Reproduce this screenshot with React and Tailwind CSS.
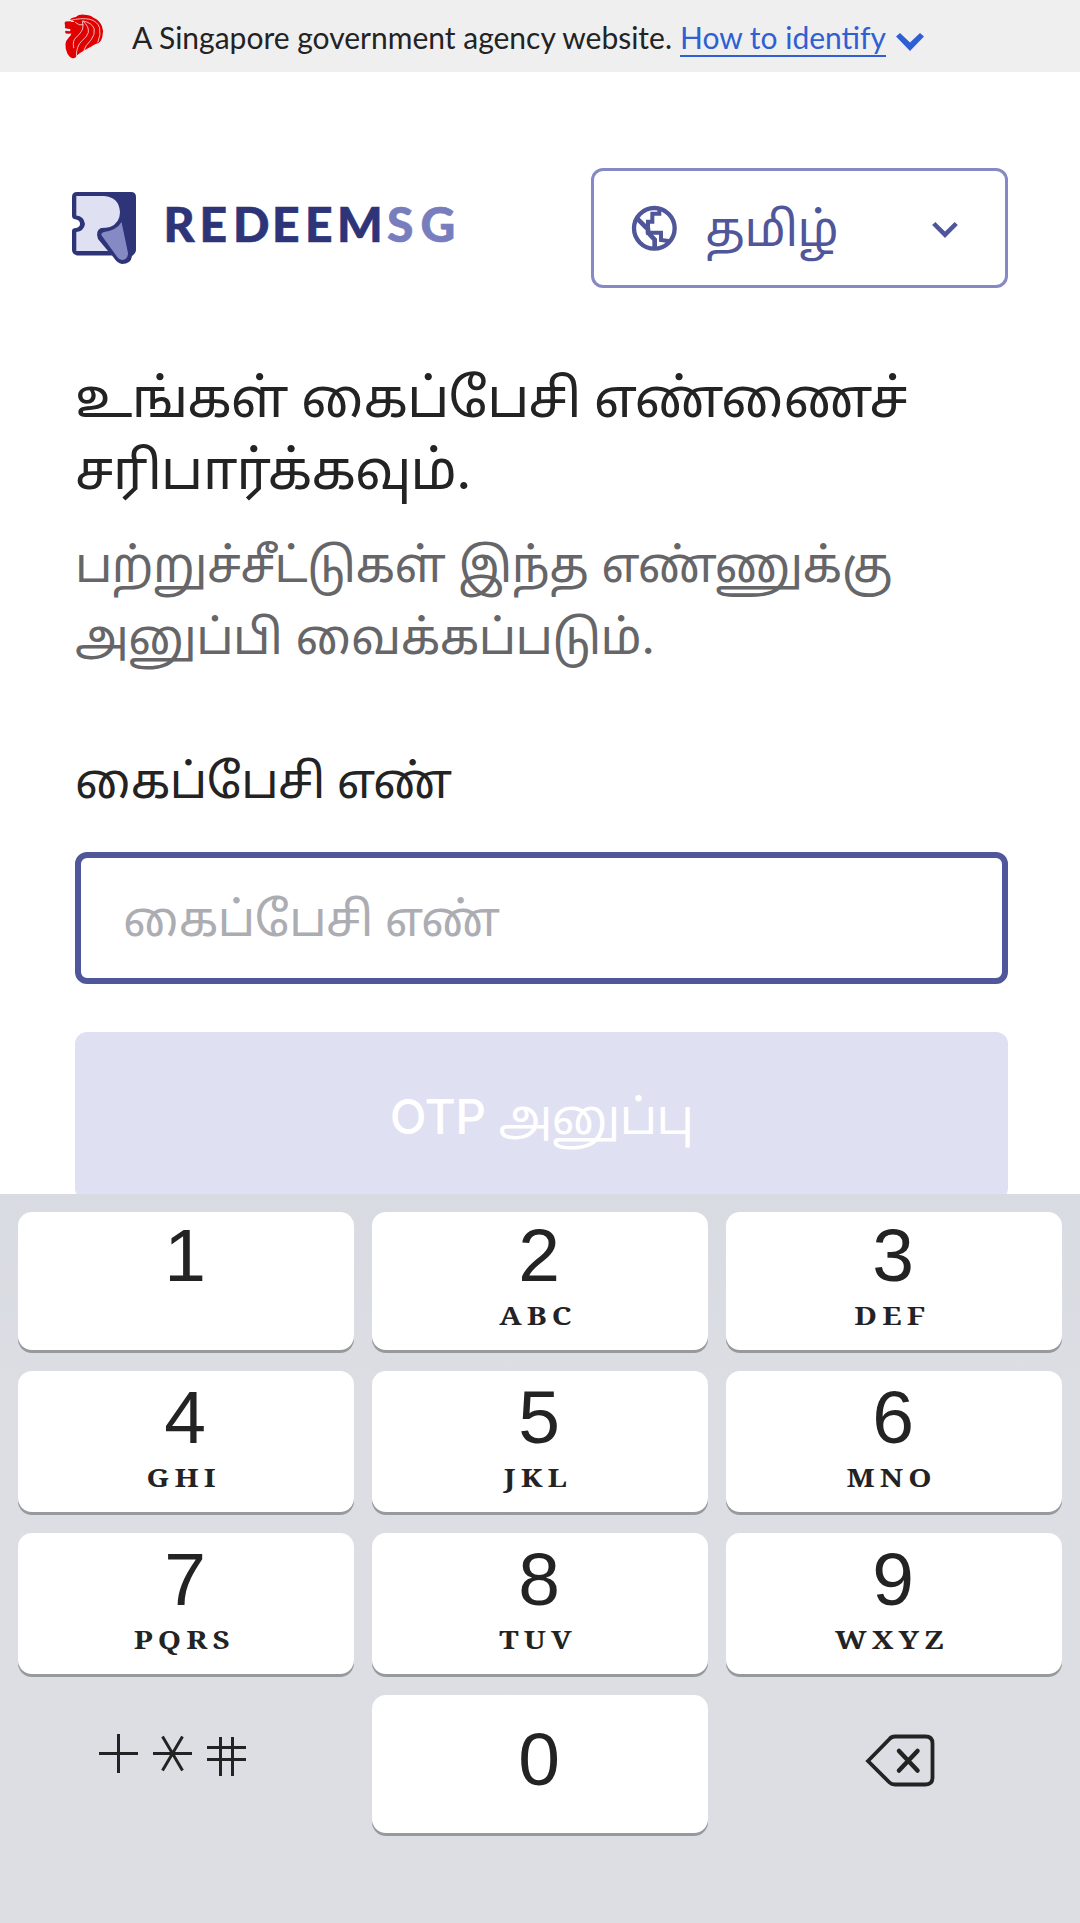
import { BiChevronDown } from "react-icons/bi";

function Lion() {
  return (
    <svg viewBox="74 43 120 136" className="h-[45px] w-[40px] shrink-0" aria-hidden="true">
      <path
        fill="#e00000"
        d="M96 56 Q103 53 109 52 Q118 44 134 45 Q152 45 164 55 Q181 62 188 79 Q194 94 190 108 Q188 123 178 131 Q168 133 156 141 Q144 148 134 153 Q122 160 111 169 Q109 177 99 177 Q90 174 84 163 Q77 150 78 134 Q79 123 88 114 Q95 108 96 102 Q86 103 79 102 Q75 98 78 94 L91 95 Q95 92 92 88 Q84 88 76 85 Q78 79 76 75 Q74 69 78 66 L92 65 Q99 68 106 66 Q98 62 92 61 Q93 58 96 56 Z"
      />
      <g fill="none" stroke="#efefef" strokeWidth="2.4" strokeLinecap="round">
        <path d="M94 62 Q126 54 152 59 Q174 65 181 84 Q186 105 176 128" />
        <path d="M131 65 Q150 80 147 99 Q143 112 128 124 Q111 139 111 168" />
        <path d="M129 66 Q134 84 126 96 Q119 106 110 114 Q98 124 103 145" />
        <path d="M131 64 Q158 69 165 88 Q168 105 155 122 Q138 138 134 152" />
        <path d="M108 69 Q120 79 131 76" />
      </g>
    </svg>
  );
}

function Logo() {
  return (
    <svg viewBox="0 0 390 74" className="h-[74px] w-[390px] shrink-0" role="img" aria-label="RedeemSG">
      <path
        fill="#2e3478"
        d="M5 0H59Q64 0 64 5V58Q64 61 60 64Q59 72 50 72Q45 71 42 66L40 63.500H5Q0 62 0 58V39Q0 36 4 36Q8 35 8 32Q8 28 4 27.500Q0 27 0 24V5Q0 0 5 0Z"
      />
      <path
        fill="#dfe0f2"
        d="M4.300 4H32Q47 5 48 20Q48 31 38 35Q34 36 29 36Q23 39 26 47L36 59H4.300V40Q12 39 13 32Q12 24 4.300 23.500Z"
      />
      <path fill="#868ac4" d="M49.500 30Q45 38 32 40Q28 41 30 44L44.500 64Q47 68 51 68Q56 67 56 61Z" />
      <g fontFamily="Lato, sans-serif" fontWeight="900" fontSize="48" strokeWidth="0.6">
        <text y="49.500" fill="#2e3478" stroke="#2e3478" x="91.500 127.500 161 200 233 265">REDEEM</text>
        <text y="49.500" fill="#777dbd" stroke="#777dbd" x="315 348.500">SG</text>
      </g>
    </svg>
  );
}

function Globe() {
  return (
    <svg viewBox="152 134 140 140" className="h-[46.667px] w-[46.667px]" fill="none" stroke="#4f5699">
      <circle cx="222" cy="204" r="61" strokeWidth="13" />
      <path strokeWidth="14" d="M170 174L203 207V217L223 238V262" />
      <path strokeWidth="12" d="M237 148V160H216V184H203V217H242V239L270 243" />
    </svg>
  );
}

function Key({ digit, letters, className }) {
  return (
    <div className={`flex flex-col items-center rounded-[14px] bg-white shadow-[0_3px_0_#98999d] ${className}`}>
      <span className="mr-[2px] font-['Liberation_Sans',sans-serif] text-[75px] leading-[84px]">{digit}</span>
      {letters && (
        <span className="mt-[3px] mr-[4px] scale-x-114 font-['Noto_Serif',serif] text-[26px] leading-[30px] font-bold tracking-[4.5px]">
          {letters}
        </span>
      )}
    </div>
  );
}

function Keypad() {
  return (
    <div className="absolute inset-x-0 bottom-0 grid h-[729px] grid-cols-[336px_336px_336px] grid-rows-[138px_141px_141px_138px] gap-x-[18px] gap-y-[21px] bg-linear-to-b from-[#d8dbe2] from-0% via-[#dddee4] via-30% to-[#dddee4] px-[18px] pt-[18px] text-[#232323]">
      <Key digit="1" className="pt-[1px]" />
      <Key digit="2" letters="ABC" className="pt-[1px]" />
      <Key digit="3" letters="DEF" className="pt-[1px]" />
      <Key digit="4" letters="GHI" className="pt-[4px]" />
      <Key digit="5" letters="JKL" className="pt-[4px]" />
      <Key digit="6" letters="MNO" className="pt-[4px]" />
      <Key digit="7" letters="PQRS" className="pt-[4px]" />
      <Key digit="8" letters="TUV" className="pt-[4px]" />
      <Key digit="9" letters="WXYZ" className="pt-[4px]" />
      <div className="flex pt-[39px] pl-[80px]">
        <svg viewBox="0 0 150 44" className="h-[44px] w-[150px]" fill="none" stroke="#232323" strokeWidth="3">
          <path d="M1 19.500H40M20.500 0V39" />
          <path d="M55 19.500H94M64.500 2.500L84.500 36.500M84.500 2.500L64.500 36.500" />
          <path d="M109 13.500H148M109 25.500H148M122.500 3V42M134.500 3V42" />
        </svg>
      </div>
      <Key digit="0" className="pt-[22px]" />
      <div className="flex pt-[39px] pl-[139px]">
        <svg viewBox="0 0 72 56" className="h-[56px] w-[72px]" fill="none" stroke="#232323" strokeWidth="3.800">
          <path d="M3 27L24.500 5Q26.500 2.500 30 2.500H60.500Q67.500 2.500 67.500 9.500V43.500Q67.500 50.500 60.500 50.500H30Q26.500 50.500 24.500 48.500Z" />
          <path d="M34 17L52.500 36.500M52.500 17L34 36.500" strokeWidth="4.500" strokeLinecap="round" />
        </svg>
      </div>
    </div>
  );
}

export default function App() {
  return (
    <div className="relative flex h-[1923px] w-[1080px] flex-col overflow-hidden bg-white font-['Inter','Noto_Sans_Tamil','Noto_Sans',sans-serif] text-[#232323]">
      <div className="flex h-[72px] shrink-0 items-center bg-[#efefef] pl-[64px] font-['Lato',sans-serif] text-[30px] tracking-normal">
        <Lion />
        <span className="mt-[2px] ml-[28px] leading-[36px]">A Singapore government agency website.</span>
        <a className="mt-[4px] ml-[8px] border-b-2 border-[#2f60d3] leading-[36px] text-[#2f60d3]">How to identify</a>
        <svg viewBox="0 0 28 18" className="mt-[11px] ml-[10px] h-[18px] w-[28px]" fill="#2f60d3">
          <path d="M0 3.500L4 0L14 9.500L24 0L28 3.500L14 18Z" />
        </svg>
      </div>

      <header className="flex shrink-0 justify-between pt-[96px] pr-[72px] pl-[72px]">
        <div className="pt-[24px]">
          <Logo />
        </div>
        <button className="flex h-[120px] w-[417px] items-center rounded-[12px] border-3 border-[#868ac4] pr-[33px] pl-[36.667px] text-[#4f5699]">
          <Globe />
          <span className="mt-[2px] ml-[28px] text-[48px] leading-[72px] tracking-[-0.011em]">தமிழ்</span>
          <BiChevronDown className="ml-auto size-[54px]" />
        </button>
      </header>

      <main className="flex flex-col pt-[74px] pr-[72px] pl-[75px]">
        <h1 className="text-[54px] leading-[72px] font-normal tracking-[-0.017em] [word-spacing:-1px]">
          உங்கள் கைப்பேசி எண்ணைச்
          <br />
          சரிபார்க்கவும்.
        </h1>
        <p className="mt-[23px] text-[48px] leading-[72px] tracking-[-0.011em] text-[#666669]">
          பற்றுச்சீட்டுகள் இந்த எண்ணுக்கு
          <br />
          அனுப்பி வைக்கப்படும்.
        </p>
        <label className="mt-[72px] text-[48px] leading-[72px] font-normal tracking-[-0.011em] [word-spacing:-1px]">கைப்பேசி எண்</label>
        <div className="mt-[35px] flex h-[132px] items-center rounded-[12px] border-6 border-[#4f5699] px-[42px] pt-[2px] text-[48px] leading-[72px] tracking-[-0.011em] text-[#acadb3] [word-spacing:-1px]">
          கைப்பேசி எண்
        </div>
        <button className="mt-[48px] h-[168px] rounded-[12px] bg-[#dfe0f2] pt-[2px] text-[48px] leading-[72px] tracking-[-0.011em] text-white">
          <span className="font-medium">OTP</span> அனுப்பு
        </button>
      </main>

      <Keypad />
    </div>
  );
}
